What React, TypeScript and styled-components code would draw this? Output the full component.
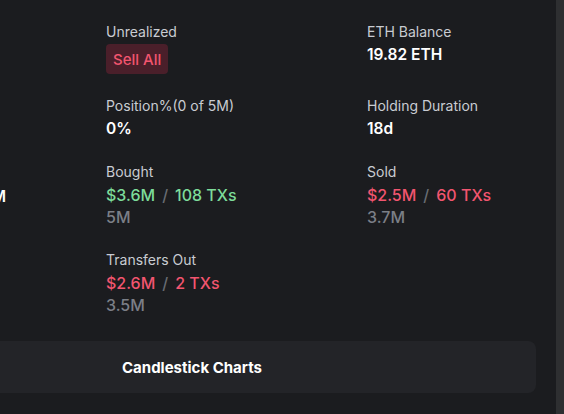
import React from "react";
import styled, { createGlobalStyle } from "styled-components";

const Global = createGlobalStyle`
  html, body { margin: 0; padding: 0; background: #1b1c1f; }
  body { font-family: Inter, "Noto Sans", sans-serif; -webkit-font-smoothing: antialiased; }
  * { box-sizing: border-box; }
`;

const Page = styled.div`
  display: flex;
  width: 564px;
  height: 414px;
  overflow: hidden;
  background: #1b1c1f;
`;

const Main = styled.div`
  flex: 1;
  min-width: 0;
  display: flex;
  flex-direction: column;
  padding-top: 22px;
`;

const ScrollTrack = styled.div`
  width: 8px;
  flex-shrink: 0;
  background: #2e2f31;
`;

const Grid = styled.div`
  display: grid;
  grid-template-columns: 106px 261px 1fr;
  row-gap: 22px;
`;

const Stat = styled.div`
  display: flex;
  flex-direction: column;
  gap: 2px;
  min-width: 0;
`;

const ClippedStat = styled(Stat)`
  align-items: flex-end;
  padding-right: 100px;
  padding-top: 2px;
  overflow: visible;
`;

const Label = styled.div`
  font-size: 14px;
  line-height: 20px;
  color: #c9ccd2;
  white-space: nowrap;
`;

const Value = styled.div`
  font-size: 15.5px;
  line-height: 22px;
  font-weight: 600;
  color: #ffffff;
  white-space: nowrap;
`;

const Spacer = styled.div`
  height: 20px;
`;

const Amount = styled.div`
  display: flex;
  flex-direction: column;
`;

const Trade = styled.div<{ $tone: "up" | "down" }>`
  font-size: 16px;
  line-height: 22px;
  font-weight: 500;
  white-space: nowrap;
  color: ${(p) => (p.$tone === "up" ? "#7ddc9a" : "#f2556f")};
`;

const Slash = styled.span`
  color: #686c73;
  margin: 0 7px;
`;

const Sub = styled.div`
  font-size: 16px;
  line-height: 22px;
  font-weight: 500;
  color: #7b7f87;
`;

const SellButton = styled.button`
  align-self: flex-start;
  height: 30px;
  padding: 0 7px;
  border: none;
  border-radius: 4px;
  background: #4a1f2a;
  color: #f2556f;
  font-family: inherit;
  font-size: 15px;
  font-weight: 500;
  cursor: pointer;
`;

const TabBar = styled.div`
  margin: 25px 20px 0 -20px;
  height: 52px;
  border-radius: 8px;
  background: #232428;
  display: flex;
  align-items: center;
`;

const Tab = styled.div<{ $active?: boolean }>`
  padding: 0 0 0 142px;
  font-size: 15px;
  font-weight: 700;
  color: ${(p) => (p.$active ? "#ffffff" : "#9a9ea6")};
  white-space: nowrap;
`;

export default function App() {
  return (
    <>
      <Global />
      <Page>
        <Main>
          <Grid>
            <div />
            <Stat>
              <Label>Unrealized</Label>
              <SellButton>Sell All</SellButton>
            </Stat>
            <Stat>
              <Label>ETH Balance</Label>
              <Value>19.82 ETH</Value>
            </Stat>

            <div />
            <Stat>
              <Label>Position%(0 of 5M)</Label>
              <Value>0%</Value>
            </Stat>
            <Stat>
              <Label>Holding Duration</Label>
              <Value>18d</Value>
            </Stat>

            <ClippedStat>
              <Spacer />
              <Value>$1.2M</Value>
            </ClippedStat>
            <Stat>
              <Label>Bought</Label>
              <Amount>
                <Trade $tone="up">
                  $3.6M<Slash>/</Slash>108 TXs
                </Trade>
                <Sub>5M</Sub>
              </Amount>
            </Stat>
            <Stat>
              <Label>Sold</Label>
              <Amount>
                <Trade $tone="down">
                  $2.5M<Slash>/</Slash>60 TXs
                </Trade>
                <Sub>3.7M</Sub>
              </Amount>
            </Stat>

            <div />
            <Stat>
              <Label>Transfers Out</Label>
              <Amount>
                <Trade $tone="down">
                  $2.6M<Slash>/</Slash>2 TXs
                </Trade>
                <Sub>3.5M</Sub>
              </Amount>
            </Stat>
            <div />
          </Grid>
          <TabBar>
            <Tab $active>Candlestick Charts</Tab>
          </TabBar>
        </Main>
        <ScrollTrack />
      </Page>
    </>
  );
}
